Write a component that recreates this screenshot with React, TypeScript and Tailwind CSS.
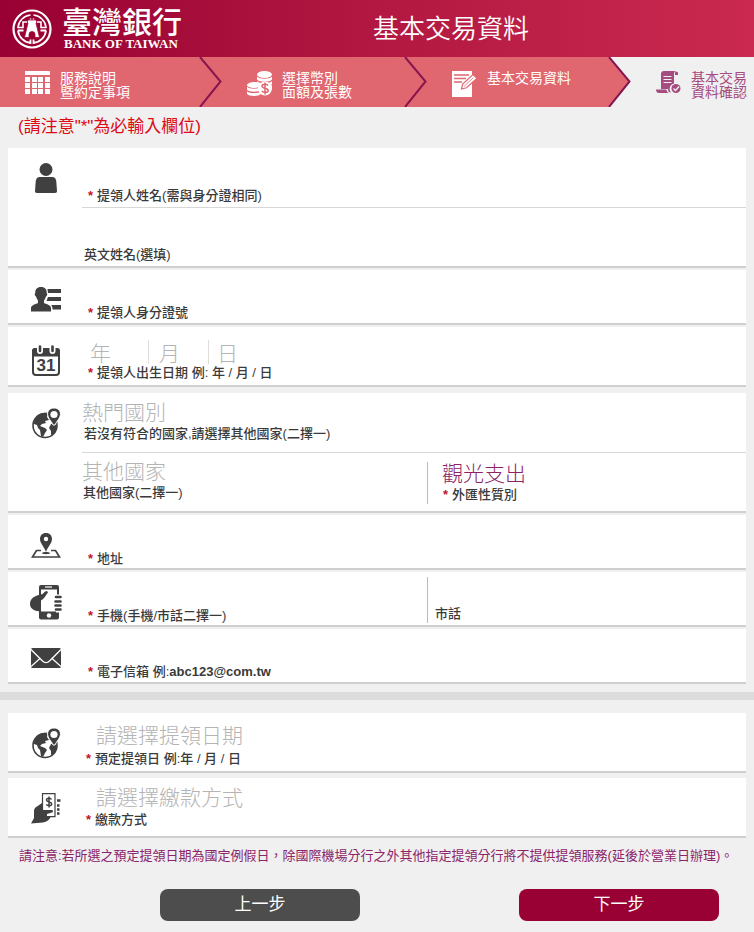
import type { ReactNode } from 'react'
import clsx from 'clsx'

/* ---------- icons ---------- */

function BankLogo() {
  return (
    <svg width="40" height="40" viewBox="0 0 40 40" fill="none" stroke="#fff">
      <circle cx="20" cy="20" r="18.500" strokeWidth="2.200" />
      <path d="M18.500 6A14 14 0 0 0 6 18.500H11V13h7.500V9.500M21.500 6A14 14 0 0 1 34 18.500H29V13h-7.500V9.500" strokeWidth="1.600" />
      <path d="M6 21.500A14 14 0 0 0 18.500 34v-3.500M6 21.500h5.500M34 21.500A14 14 0 0 1 21.500 34v-3.500M34 21.500h-5.500" strokeWidth="1.800" />
      <path d="M15.500 11h9v3H24l3.500 14.500H23V25.500a3 3 0 0 0-6 0v3h-4.500L16 14h-.5z" fill="#fff" stroke="#a00638" strokeWidth=".8" />
    </svg>
  )
}

function TableIcon() {
  return (
    <svg width="25" height="23" viewBox="0 0 25 23" fill="#fff">
      <path d="M0 0h25v4H0z" />
      {[6, 12, 18].map((y) =>
        [0, 7, 13, 20].map((x) => <rect key={`${x}-${y}`} x={x} y={y} width="5" height="5" />)
      )}
    </svg>
  )
}

function CoinsIcon() {
  return (
    <svg width="26" height="26" viewBox="0 0 26 26" fill="#fff">
      <ellipse cx="17.500" cy="3.500" rx="7.500" ry="3.500" />
      <path d="M10 5.500c2 3 13 3 15 0v3c-2 3-13 3-15 0zM10 10c2 3 13 3 15 0v3c-2 3-13 3-15 0zM18 15.500c3 0 6-.5 7-1.500v3c-1 1.500-4 2-7 2z" />
      <ellipse cx="7" cy="14" rx="7" ry="3" />
      <path d="M0 15.800c2 2.500 12 2.500 14 0v3c-2 2.500-12 2.500-14 0zM0 20.200c2 2.500 12 2.500 14 0v2.500c-2 3-12 3-14 0z" />
      <circle cx="18" cy="17.500" r="7" />
      <path d="M21 14.500c-1-1.600-6-1.700-6 .8 0 2.600 6.200 1.400 6.200 4.200 0 2.500-5 2.500-6.400.3M18 11.500v12" fill="none" stroke="#e0666f" strokeWidth="1.500" />
    </svg>
  )
}

function FormIcon() {
  return (
    <svg width="26" height="26" viewBox="0 0 26 26">
      <path d="M0 0h20v26H0z" fill="#fff" />
      <path d="M2 4h15M2 7.500h12M2 11h8" stroke="#e0666f" strokeWidth="1.300" />
      <path d="M9.500 18l1.200-5L21 3.500l4 3.800-10.500 9.500z" fill="#fff" stroke="#e0666f" strokeWidth="1.200" />
      <path d="M12 15.500l9.500-9" stroke="#e0666f" strokeWidth=".8" />
    </svg>
  )
}

function ScrollIcon() {
  return (
    <svg width="25" height="23" viewBox="0 0 25 23" fill="#a54c80">
      <path d="M5 3a3 3 0 0 1 3-3h12a3 3 0 0 0-2 3v9.500a5.500 5.500 0 0 0-3 9c-2 0-3-1-3-3.500H5z" />
      <path d="M19 4V2a1.500 1.500 0 0 1 3 0v2zM0 18.500h10.500c0 2 1 3 2.500 3.500H3c-2 0-3-1.500-3-3.500z" />
      <circle cx="20" cy="17.500" r="4.500" />
      <path d="M7.500 5.500h8M7.500 8.500h8M7.500 11.500h8" stroke="#f0f0f0" strokeWidth="1.200" />
      <path d="M17.500 17.500l2 2 3.500-4" fill="none" stroke="#f0f0f0" strokeWidth="1.300" />
    </svg>
  )
}

function PersonIcon() {
  return (
    <svg width="24" height="30" viewBox="0 0 24 30" fill="#404041">
      <circle cx="12" cy="6.500" r="6.500" />
      <path d="M6 14h12c3 0 4 2 4.300 4.500L23 28c.1 1.300-.5 2-2 2H3c-1.500 0-2.100-.7-2-2l.7-9.500C2 16 3 14 6 14z" />
    </svg>
  )
}

function IdIcon() {
  return (
    <svg width="30" height="25" viewBox="0 0 30 25" fill="#404041">
      <path d="M10 0c4 0 6 2.500 5.700 6 1 .5.600 3-.7 3.500-.5 2-1.500 3-2 4v2.500c2 1.200 7 2 7 5V24.500H0V21c0-3 5-3.800 7-5v-2.500c-.5-1-1.500-2-2-4C3.700 9 3.300 6.500 4.300 6 4 2.500 6 0 10 0z" />
      <path d="M16.500 2H30v4H17zM17 10h13v4H15.500zM20 18h10v4.500h-8.500c0-2-.3-3.500-1.500-4.500z" />
    </svg>
  )
}

function CalendarIcon() {
  return (
    <svg width="28" height="31" viewBox="0 0 28 31">
      <rect x="1" y="4" width="26" height="26" rx="3" fill="#fff" stroke="#404041" strokeWidth="2" />
      <path d="M0 11.500V6a3 3 0 0 1 3-3h22a3 3 0 0 1 3 3v5.500z" fill="#404041" />
      <path d="M8 1v5M20.500 1v5" stroke="#fff" strokeWidth="6" strokeLinecap="round" />
      <path d="M8 1.500V6M20.500 1.500V6" stroke="#404041" strokeWidth="2.600" strokeLinecap="round" />
      <text x="14" y="26" textAnchor="middle" fill="#404041" fontFamily="Liberation Sans, sans-serif" fontWeight="bold" fontSize="17">31</text>
    </svg>
  )
}

function GlobeIcon() {
  return (
    <svg width="29" height="31" viewBox="0 0 29 31">
      <circle cx="13" cy="17.500" r="12" fill="#fff" stroke="#404041" strokeWidth="1.600" />
      <path d="M2 14C4 7 9 4 16 5l-1 4 2 3-4 1 1 2-4 1-2 2 5 2 2 2-2 3-2 4-2-1-1-6-2-2-1-3-3-1zM19 16l5-1 1 5-3 6-3 1 0-4-2-3z" fill="#404041" />
      <path d="M22 0c4 0 6.500 2.700 6.500 6.200 0 4-4 6.800-5.500 10.800h-2c-1.500-4-5.500-6.800-5.500-10.800C15.500 2.700 18 0 22 0z" fill="#404041" stroke="#fff" />
      <circle cx="22" cy="6.500" r="3.600" fill="#fff" />
    </svg>
  )
}

function MapIcon() {
  return (
    <svg width="30" height="26" viewBox="0 0 30 26">
      <path d="M10 17.500H5.500L1.500 24h27l-4-6.500H20" fill="none" stroke="#404041" strokeWidth="1.700" />
      <path d="M10.500 20c2-1.500 7-1.500 9 0-2 1.600-7 1.600-9 0z" fill="#404041" />
      <path d="M15 0c3.800 0 6 2.600 6 6 0 4.500-4.500 8-6 13-1.500-5-6-8.500-6-13 0-3.400 2.200-6 6-6z" fill="#404041" />
      <circle cx="15" cy="6" r="2.200" fill="#fff" />
    </svg>
  )
}

function PhoneIcon() {
  return (
    <svg width="32" height="35" viewBox="0 0 32 35">
      <rect x="9" y="0" width="20" height="34.500" rx="2" fill="#404041" />
      <path d="M11 4.500h16v22H11z" fill="#fff" />
      <path d="M15 2h7" stroke="#fff" strokeWidth="1.200" />
      <circle cx="19" cy="30.500" r="2.200" fill="#fff" />
      <path d="M17 6c-2 0-3 1.500-4.500 3L7 10.500C2.500 12 0 15 0 19c0 4 3 7 11 7.500v-11c3-1.500 5-5.500 7-8z" fill="#404041" />
      <path d="M26 12h5M25 16.500h6M25 20.500h6M26 25h5" stroke="#fff" strokeWidth="5" />
      <path d="M26 12h4.500M25.500 16.500h5M25.500 20.500h5M26 24.500h4.500" stroke="#404041" strokeWidth="2.600" strokeLinecap="round" />
    </svg>
  )
}

function MailIcon() {
  return (
    <svg width="30" height="20" viewBox="0 0 30 20">
      <rect width="30" height="20" rx="1.500" fill="#404041" />
      <path d="M0 1.500l11.500 11.500c2 2 5 2 7 0L30 1.500M0 18.500l9.500-8.500M30 18.500L20.500 10" fill="none" stroke="#fff" strokeWidth="1.300" />
    </svg>
  )
}

function PayIcon() {
  return (
    <svg width="30" height="31" viewBox="0 0 30 31">
      <path d="M11.500.6H24v23h-12.500z" fill="#fff" stroke="#404041" strokeWidth="1.200" />
      <path d="M0 30.500l3-5.500V18c0-2 1-3.500 3-4.500l5-3.500v7h9.500c2 0 2 2 .5 2.500l-5 1.500v2h4c-1.500 4-4 6-8 6.500z" fill="#404041" />
      <path d="M20.500 6.500c-.8-1.700-5-1.700-5 .6 0 2.300 5.200 1.300 5.200 3.800 0 2.300-4.300 2.300-5.400.4M18 3.500v11" fill="none" stroke="#404041" strokeWidth="1.500" />
      <path d="M26 7.500h3.500M26 12.500h2.500M26 16.500h2.500M26 20.500h2.500" stroke="#404041" strokeWidth="2.600" />
    </svg>
  )
}

/* ---------- building blocks ---------- */

interface StepProps {
  icon: ReactNode
  text: string
  done?: boolean
  next?: string
}

function Step({ icon, text, done = true, next = 'fill-[#e0666f]' }: StepProps) {
  return (
    <li className={clsx('flex h-[50px] justify-between', done ? 'bg-[#e0666f] text-white' : 'text-[#a54c80]')}>
      <a href="#" className="flex items-start gap-2.5 pt-3.5 pl-[25px] text-sm leading-[14px]">
        <span className="w-[25px] shrink-0">{icon}</span>
        <span className="whitespace-pre">{text}</span>
      </a>
      {done && (
        <svg width="24" height="50" viewBox="0 0 24 50" className="shrink-0">
          <path d="M2 0l21 25L2 50h22V0z" className={next} />
          <path d="M2 0l20.500 24.500L2 50" fill="none" stroke="#871650" strokeWidth="2" />
        </svg>
      )}
    </li>
  )
}

function Card({ icon, iconClass, children }: { icon: ReactNode; iconClass: string; children: ReactNode }) {
  return (
    <section className="flex border-b-2 border-[#cfcfcf] bg-white">
      <div className={clsx('flex w-[74px] shrink-0 items-start justify-center pl-0.5', iconClass)}>{icon}</div>
      <div className="min-w-0 flex-1">{children}</div>
    </section>
  )
}

interface FieldProps {
  id: string
  label: ReactNode
  required?: boolean
  className?: string
  labelClass?: string
  children?: ReactNode
}

function Field({ id, label, required, className, labelClass = 'pl-1.5', children }: FieldProps) {
  return (
    <div className={className}>
      {children ?? <input id={id} type="text" className="block h-6 w-full px-1.5 text-xl text-[#8b2468] outline-none" />}
      <label htmlFor={id} className={clsx('flex gap-1 text-[13px] leading-[18px] font-medium text-[#3a3a3a]', labelClass)}>
        {required && <span className="font-bold text-[#c0142c]">*</span>}
        <span>{label}</span>
      </label>
    </div>
  )
}

function Picker({ id, text, className, label }: { id: string; text: string; className: string; label?: string }) {
  return (
    <select
      id={id}
      aria-label={label}
      className={clsx('block h-6 appearance-none bg-transparent text-[21px] leading-6 font-light outline-none', className)}
    >
      <option>{text}</option>
    </select>
  )
}

export default function App() {
  return (
    <div className="min-h-screen bg-[#f0f0f0] pb-[11px] font-['Liberation_Sans','Noto_Sans_CJK_TC',sans-serif]">
      <header className="flex h-[57px] items-center bg-linear-to-r from-[#990033] to-[#cb294f] pl-3 text-white">
        <a href="#" className="flex items-center gap-2.5">
          <BankLogo />
          <span className="flex flex-col">
            <span className="text-[30px] leading-[30px] font-medium">臺灣銀行</span>
            <span className="pl-0.5 font-['Liberation_Serif',serif] text-[13px] leading-3 font-bold">BANK OF TAIWAN</span>
          </span>
        </a>
        <h1 className="flex-1 pr-[34px] text-center text-[26px] leading-8 font-[350]">基本交易資料</h1>
      </header>

      <nav>
        <ol className="grid grid-cols-[222fr_205fr_204fr_123fr]">
          <Step icon={<TableIcon />} text={'服務說明\n暨約定事項'} />
          <Step icon={<CoinsIcon />} text={'選擇幣別\n面額及張數'} />
          <Step icon={<FormIcon />} text="基本交易資料" next="fill-[#f0f0f0]" />
          <Step icon={<ScrollIcon />} text={'基本交易\n資料確認'} done={false} />
        </ol>
      </nav>

      <form>
        <p className="px-[18px] pt-2 pb-[9px] text-[17px] leading-6 text-[#dc0a14]">(請注意"*"為必輸入欄位)</p>

        <div className="flex flex-col gap-0.5 px-2">
          <Card icon={<PersonIcon />} iconClass="pt-[15px]">
            <Field id="name" label="提領人姓名(需與身分證相同)" required className="border-b border-[#d8d8d8] pt-[15px] pb-0.5" />
            <Field id="name-en" label="英文姓名(選填)" className="pt-3.5 pb-0.5" labelClass="pl-0.5" />
          </Card>

          <Card icon={<IdIcon />} iconClass="pt-[17px]">
            <Field id="id-no" label="提領人身分證號" required className="pt-2.5 pb-px" />
          </Card>

          <Card icon={<CalendarIcon />} iconClass="pt-[18px]">
            <Field id="birth-year" label="提領人出生日期 例: 年 / 月 / 日" required className="pt-[13px] pb-[3px]">
              <div className="flex text-[#b4b4b4]">
                <Picker id="birth-year" text="年" className="w-[66px] pt-0.5 pl-2" />
                <Picker id="birth-month" label="月" text="月" className="w-[60px] border-l border-[#ddd] pt-0.5 pl-2.5" />
                <Picker id="birth-day" label="日" text="日" className="w-[60px] border-l border-[#ddd] pt-0.5 pl-2" />
              </div>
            </Field>
          </Card>

          <div className="pt-1">
            <Card icon={<GlobeIcon />} iconClass="pt-[15px]">
              <Field
                id="country"
                label="若沒有符合的國家,請選擇其他國家(二擇一)"
                className="border-b border-[#d8d8d8] pt-2 pb-[9px]"
                labelClass="pl-0.5"
              >
                <Picker id="country" text="熱門國別" className="w-full text-[#b4b4b4]" />
              </Field>
              <div className="grid grid-cols-[345fr_319fr]">
                <Field id="country-other" label="其他國家(二擇一)" className="pt-[7px] pb-[9px]" labelClass="pl-px">
                  <Picker id="country-other" text="其他國家" className="w-full text-[#b4b4b4]" />
                </Field>
                <Field id="purpose" label="外匯性質別" required className="mt-[9px] mb-[7px] border-l border-[#bbb] pl-3.5" labelClass="pl-px">
                  <Picker id="purpose" text="觀光支出" className="w-full text-[#8b2468]" />
                </Field>
              </div>
            </Card>
          </div>

          <Card icon={<MapIcon />} iconClass="pt-[18px]">
            <Field id="address" label="地址" required className="pt-[11px]" />
          </Card>

          <Card icon={<PhoneIcon />} iconClass="pt-[13px]">
            <div className="grid grid-cols-[345fr_319fr]">
              <Field id="mobile" label="手機(手機/市話二擇一)" required className="pt-[11px]" />
              <Field id="phone" label="市話" className="mt-[5px] mb-0.5 border-l border-[#bbb] pt-1 pl-px" />
            </div>
          </Card>

          <Card icon={<MailIcon />} iconClass="pt-[19px]">
            <Field
              id="email"
              label={<>電子信箱 例:<b>abc123@com.tw</b></>}
              required
              className="pt-2.5 pb-px"
            />
          </Card>
        </div>

        <hr className="mt-2 mb-[13px] border-t-8 border-[#dcdcdc]" />

        <div className="flex flex-col gap-[5px] px-2">
          <Card icon={<GlobeIcon />} iconClass="pt-[15px]">
            <Field id="pickup-date" label="預定提領日 例:年 / 月 / 日" required className="pt-[11px] pb-[3px]" labelClass="pt-0.5 pl-1">
              <Picker id="pickup-date" text="請選擇提領日期" className="w-full pl-3.5 text-[#b4b4b4]" />
            </Field>
          </Card>
          <Card icon={<PayIcon />} iconClass="pt-[15px]">
            <Field id="payment" label="繳款方式" required className="pt-2 pb-[7px]" labelClass="pt-px pl-1">
              <Picker id="payment" text="請選擇繳款方式" className="w-full pl-3.5 text-[#b4b4b4]" />
            </Field>
          </Card>
        </div>

        <p className="pt-2.5 pr-2 pl-[19px] text-[13px] leading-4 text-[#8b2468]">
          請注意:若所選之預定提領日期為國定例假日，除國際機場分行之外其他指定提領分行將不提供提領服務(延後於營業日辦理)。
        </p>

        <div className="flex justify-between pt-[25px] pr-[35px] pl-40 text-[17px] leading-8 text-white">
          <button type="button" className="h-8 w-[200px] rounded-lg bg-[#4d4d4d]">上一步</button>
          <button type="submit" className="h-8 w-[200px] rounded-lg bg-[#990033]">下一步</button>
        </div>
      </form>
    </div>
  )
}
